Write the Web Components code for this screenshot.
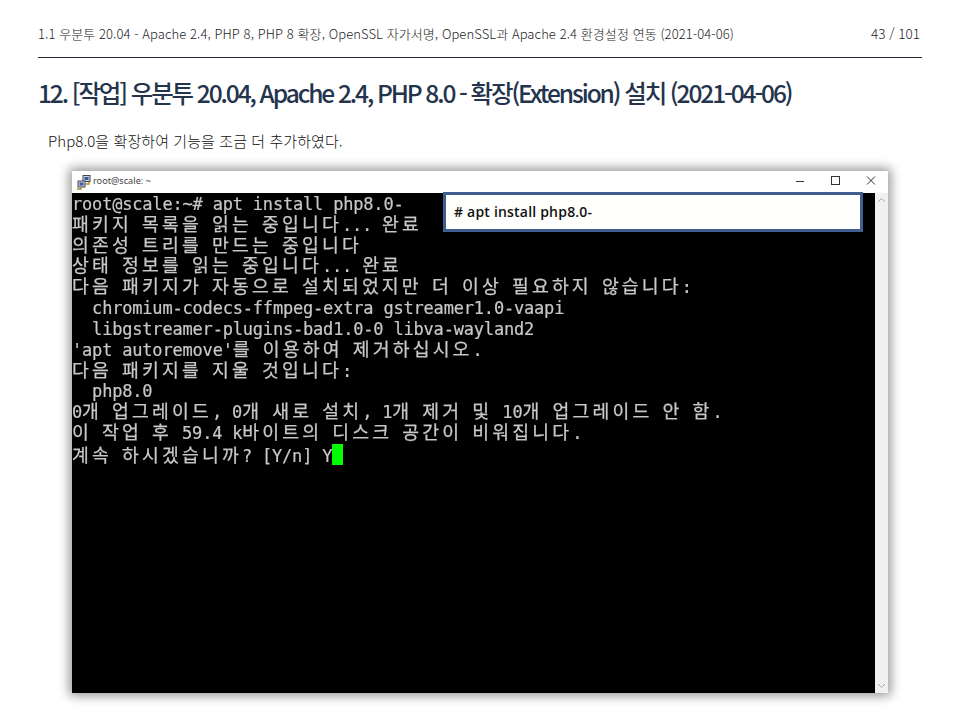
<!DOCTYPE html>
<html lang="ko">
<head>
<meta charset="utf-8">
<title>slide</title>
<style>
  html, body { margin: 0; background: #fff; }
  body { font-family: "Noto Sans CJK KR", "Noto Sans", sans-serif; }
</style>
</head>
<body>
<slide-page>
  <page-header slot="header" pages="43 / 101">1.1 우분투 20.04 - Apache 2.4, PHP 8, PHP 8 확장, OpenSSL 자가서명, OpenSSL과 Apache 2.4 환경설정 연동 (2021-04-06)</page-header>
  <h-title slot="title">12. [작업] 우분투 20.04, Apache 2.4, PHP 8.0 - 확장(Extension) 설치 (2021-04-06)</h-title>
  <body-text slot="text">Php8.0을 확장하여 기능을 조금 더 추가하였다.</body-text>
  <putty-window slot="shot" wintitle="root@scale: ~">
    <term-line>root@scale:~# apt install php8.0-</term-line>
    <term-line>패키지 목록을 읽는 중입니다... 완료</term-line>
    <term-line>의존성 트리를 만드는 중입니다</term-line>
    <term-line>상태 정보를 읽는 중입니다... 완료</term-line>
    <term-line>다음 패키지가 자동으로 설치되었지만 더 이상 필요하지 않습니다:</term-line>
    <term-line>  chromium-codecs-ffmpeg-extra gstreamer1.0-vaapi</term-line>
    <term-line>  libgstreamer-plugins-bad1.0-0 libva-wayland2</term-line>
    <term-line>'apt autoremove'를 이용하여 제거하십시오.</term-line>
    <term-line>다음 패키지를 지울 것입니다:</term-line>
    <term-line>  php8.0</term-line>
    <term-line>0개 업그레이드, 0개 새로 설치, 1개 제거 및 10개 업그레이드 안 함.</term-line>
    <term-line>이 작업 후 59.4 k바이트의 디스크 공간이 비워집니다.</term-line>
    <term-line cursor>계속 하시겠습니까? [Y/n] Y</term-line>
    <call-out slot="over"># apt install php8.0-</call-out>
  </putty-window>
</slide-page>

<script>
class SlidePage extends HTMLElement {
  constructor() {
    super();
    this.attachShadow({mode: "open"}).innerHTML = `
    <style>
      :host { display: block; width: 960px; height: 720px; overflow: hidden; box-sizing: border-box; padding: 0 38px; background: #fff; }
      .shot { margin: 16px 0 0 34px; }
    </style>
    <slot name="header"></slot>
    <slot name="title"></slot>
    <slot name="text"></slot>
    <div class="shot"><slot name="shot"></slot></div>`;
  }
}

class PageHeader extends HTMLElement {
  constructor() {
    super();
    this.attachShadow({mode: "open"}).innerHTML = `
    <style>
      :host { display: flex; justify-content: space-between; align-items: center; box-sizing: border-box; height: 58px; width: 884px; padding: 9px 1px 0 0; border-bottom: 1px solid #222b36; font-size: 13px; font-weight: 300; color: #222; letter-spacing: .08px; }
      .pages { font-size: 13.5px; padding-right: 1px; letter-spacing: 0; }
    </style>
    <div><slot></slot></div>
    <div class="pages"></div>`;
    this.shadowRoot.querySelector(".pages").textContent = this.getAttribute("pages");
  }
}

class HTitle extends HTMLElement {
  constructor() {
    super();
    this.attachShadow({mode: "open"}).innerHTML = `
    <style>
      :host { display: block; height: 70px; line-height: 70px; font-size: 24.5px; font-weight: 500; color: #24344d; letter-spacing: -2.09px; white-space: nowrap; }
    </style>
    <slot></slot>`;
  }
}

class BodyText extends HTMLElement {
  constructor() {
    super();
    this.attachShadow({mode: "open"}).innerHTML = `
    <style>
      :host { display: block; height: 27px; line-height: 25px; padding-left: 10px; font-size: 15px; font-weight: 300; color: #111; letter-spacing: .08px; }
    </style>
    <slot></slot>`;
  }
}

class PuttyWindow extends HTMLElement {
  constructor() {
    super();
    this.attachShadow({mode: "open"}).innerHTML = `
    <style>
      :host { display: block; position: relative; width: 816px; height: 522px; background: #fff; box-shadow: 0 0 10px 3px rgba(0,0,0,.4); font-family: "Noto Sans", sans-serif; }
      .bar { display: flex; align-items: center; height: 22px; padding-left: 4px; font-size: 9.2px; color: #444; }
      .bar svg { flex: none; }
      .name { margin: 0 0 3px 1px; flex: 1; }
      .btns { display: flex; }
      .btns svg { display: block; width: 35px; height: 22px; }
      .main { display: flex; height: 500px; }
      .term { flex: 1; background: #000; padding-top: 1px; }
      .scroll { display: flex; flex-direction: column; justify-content: space-between; align-items: center; width: 13px; background: #f0f0f0; padding: 4px 0; box-sizing: border-box; }
      .scroll svg { display: block; }
    </style>
    <div class="bar">
      <svg width="16" height="16" viewBox="0 0 16 16">
        <rect x="7" y="1.5" width="7" height="6" fill="#c8d4e8" stroke="#445" stroke-width="1"/>
        <rect x="8.5" y="3" width="4" height="3" fill="#3a5a9a"/>
        <rect x="2" y="7" width="7" height="6" fill="#c8d4e8" stroke="#445" stroke-width="1"/>
        <rect x="3.5" y="8.5" width="4" height="3" fill="#3a5a9a"/>
        <path d="M9 10 L13 10 L13 8 M5 13 L5 15 L1 15" fill="none" stroke="#a58a2a" stroke-width="1.3"/>
      </svg>
      <span class="name"></span>
      <div class="btns">
        <svg viewBox="0 0 35 22"><path d="M13 10.5h8" stroke="#333" stroke-width="1"/></svg>
        <svg viewBox="0 0 35 22"><rect x="13.5" y="5.5" width="8" height="8" fill="none" stroke="#333" stroke-width="1"/></svg>
        <svg viewBox="0 0 35 22"><path d="M14 5.5l8 8M22 5.5l-8 8" stroke="#333" stroke-width="1" fill="none"/></svg>
      </div>
    </div>
    <div class="main">
      <div class="term"><slot></slot></div>
      <div class="scroll">
        <svg width="9" height="6" viewBox="0 0 9 6"><path d="M1 5l3.5-3.5L8 5" fill="none" stroke="#aaa"/></svg>
        <svg width="9" height="6" viewBox="0 0 9 6"><path d="M1 1l3.5 3.5L8 1" fill="none" stroke="#aaa"/></svg>
      </div>
    </div>
    <slot name="over"></slot>`;
    this.shadowRoot.querySelector(".name").textContent = this.getAttribute("wintitle");
  }
}

class TermLine extends HTMLElement {
  constructor() {
    super();
    this.attachShadow({mode: "open"});
  }
  connectedCallback() {
    // wide chars take two cells, so hangul runs get their own font and spacing
    const runs = this.textContent.match(/[\uac00-\ud7a3]+|[^\uac00-\ud7a3]+/g) || [];
    const html = runs.map(r => {
      const safe = r.replace(/&/g, "&amp;").replace(/</g, "&lt;");
      return /[\uac00-\ud7a3]/.test(r) ? `<span class="k">${safe}</span>` : `<span class="a">${safe}</span>`;
    }).join("");
    // no whitespace around the style: this host is white-space: pre
    // .k names Liberation Mono first so its box stays inside the 20.83px row
    this.shadowRoot.innerHTML = `<style>
      :host { display: block; height: 20.83px; line-height: 20.83px; white-space: pre; color: #c8c8c8; filter: blur(.35px); }
      .a { font-family: "DejaVu Sans Mono", monospace; font-size: 17px; letter-spacing: -.19px; -webkit-text-stroke: .2px #c8c8c8; }
      .k { font-family: "Liberation Mono", "Noto Sans CJK KR", sans-serif; font-size: 18.3px; letter-spacing: 3.16px; -webkit-text-stroke: .25px #c8c8c8; }
      .cur { display: inline-block; width: 11px; height: 21px; background: #00ff00; vertical-align: -3px; }
    </style>${html}${this.hasAttribute("cursor") ? '<span class="cur"></span>' : ""}`;
  }
}

class CallOut extends HTMLElement {
  constructor() {
    super();
    this.attachShadow({mode: "open"}).innerHTML = `
    <style>
      :host { position: absolute; left: 371px; top: 21px; box-sizing: border-box; width: 420px; height: 40px; display: flex; align-items: center; padding: 0 0 2px 8px; background: #fffffd; border: 3px solid #3f5f8f; font-family: "Open Sans", sans-serif; font-size: 14px; font-weight: 600; color: #111; letter-spacing: .2px; }
    </style>
    <slot></slot>`;
  }
}

customElements.define("slide-page", SlidePage);
customElements.define("page-header", PageHeader);
customElements.define("h-title", HTitle);
customElements.define("body-text", BodyText);
customElements.define("putty-window", PuttyWindow);
customElements.define("term-line", TermLine);
customElements.define("call-out", CallOut);
</script>
</body>
</html>
